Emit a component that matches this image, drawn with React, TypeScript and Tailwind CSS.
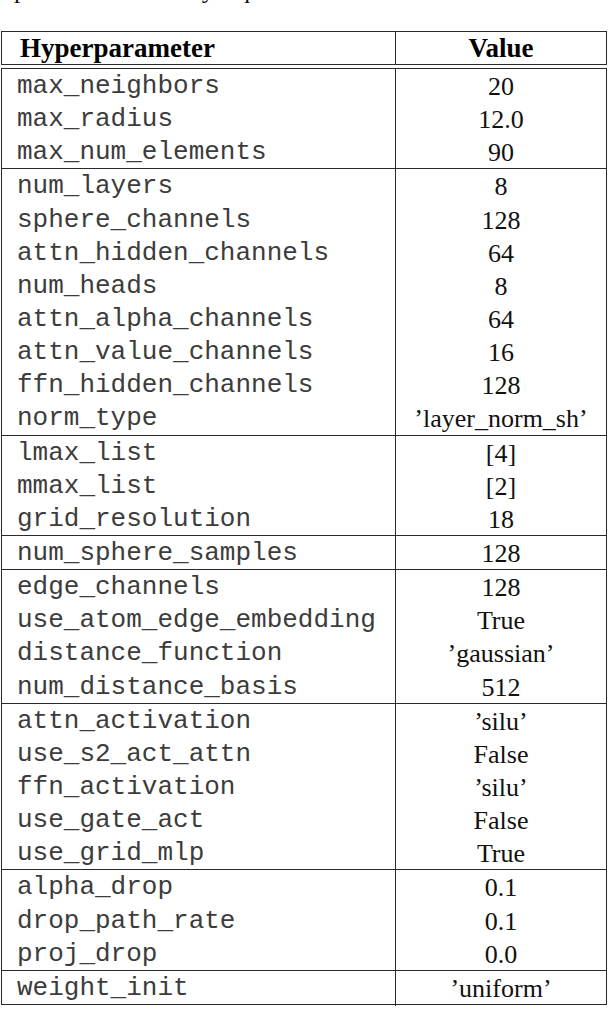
const groups: [string, string][][] = [
  [
    ['max_neighbors', '20'],
    ['max_radius', '12.0'],
    ['max_num_elements', '90'],
  ],
  [
    ['num_layers', '8'],
    ['sphere_channels', '128'],
    ['attn_hidden_channels', '64'],
    ['num_heads', '8'],
    ['attn_alpha_channels', '64'],
    ['attn_value_channels', '16'],
    ['ffn_hidden_channels', '128'],
    ['norm_type', '\u2019layer_norm_sh\u2019'],
  ],
  [
    ['lmax_list', '[4]'],
    ['mmax_list', '[2]'],
    ['grid_resolution', '18'],
  ],
  [['num_sphere_samples', '128']],
  [
    ['edge_channels', '128'],
    ['use_atom_edge_embedding', 'True'],
    ['distance_function', '\u2019gaussian\u2019'],
    ['num_distance_basis', '512'],
  ],
  [
    ['attn_activation', '\u2019silu\u2019'],
    ['use_s2_act_attn', 'False'],
    ['ffn_activation', '\u2019silu\u2019'],
    ['use_gate_act', 'False'],
    ['use_grid_mlp', 'True'],
  ],
  [
    ['alpha_drop', '0.1'],
    ['drop_path_rate', '0.1'],
    ['proj_drop', '0.0'],
  ],
  [['weight_init', '\u2019uniform\u2019']],
];

const serif = "font-['Liberation_Serif',serif]";
const mono = "font-['Courier_New','Liberation_Mono',monospace]";

function Row({ name, value }: { name: string; value: string }) {
  return (
    <div className="grid grid-cols-[394px_1fr] h-[33.15px]">
      <div className={`${mono} border-r border-[#2a2a2a] pl-[15px] text-[26px] leading-[35px] text-[#3c3c3c]`}>
        {name}
      </div>
      <div className={`${serif} text-center text-[26px] leading-[35px] text-[#111]`}>{value}</div>
    </div>
  );
}

export default function App() {
  return (
    <div className="w-[608px] h-[1010px] bg-white overflow-hidden">
      {/* tail of the caption line above, cut off by the crop */}
      <div className={`${serif} h-[5px] overflow-hidden text-[26px] text-[#111]`}>
        <div className="-mt-[25px] pl-[14px] whitespace-nowrap leading-[30px]">
          parameters used by EquiformerV2 on OC20 S2EF-2M dataset.
        </div>
      </div>

      <div className="mt-[26px] ml-[1px] w-[606px]">
        {/* header */}
        <div className="grid grid-cols-[394px_1fr] h-[34px] border border-[#2a2a2a]">
          <div className={`${serif} border-r border-[#2a2a2a] pl-[18px] text-[27px] font-bold leading-[33px] text-black`}>
            Hyperparameter
          </div>
          <div className={`${serif} text-center text-[27px] font-bold leading-[33px] text-black`}>Value</div>
        </div>

        {/* body */}
        <div className="mt-[3px] border border-[#2a2a2a]">
          {groups.map((g, i) => (
            <div key={i} className={i < groups.length - 1 ? 'border-b border-[#2a2a2a]' : ''}>
              {g.map(([n, v]) => (
                <Row key={n} name={n} value={v} />
              ))}
            </div>
          ))}
        </div>
      </div>
    </div>
  );
}
